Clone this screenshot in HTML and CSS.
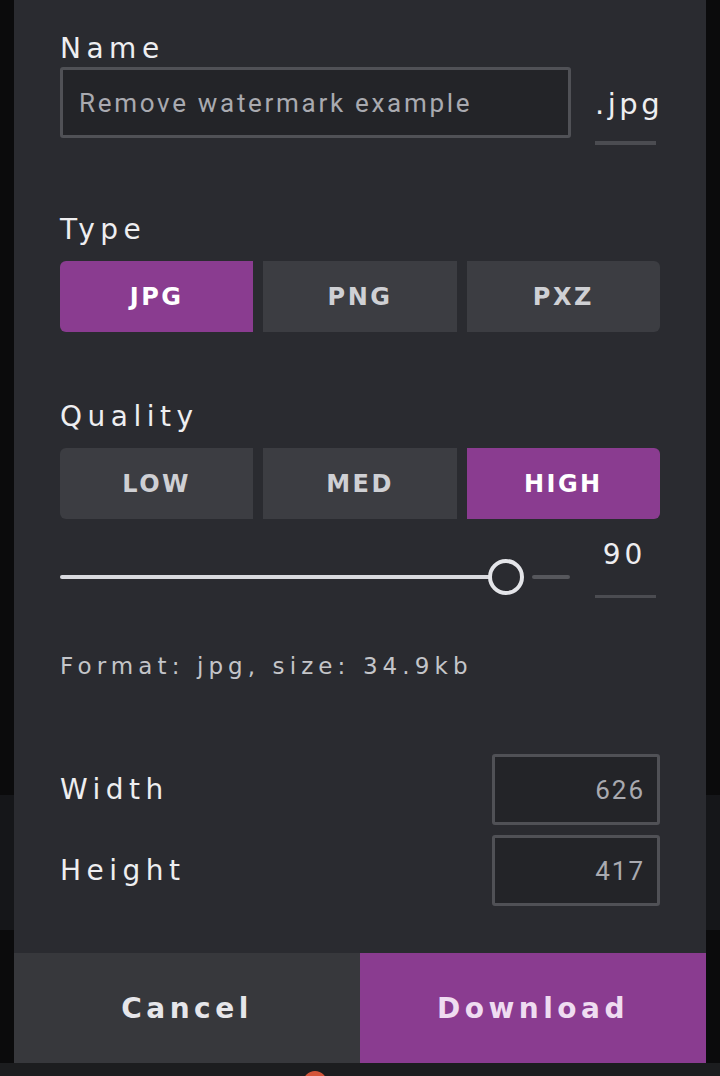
FILE: index.html
```html
<!DOCTYPE html>
<html>
<head>
<meta charset="utf-8">
<link rel="stylesheet" href="styles.css">
</head>
<body>
<div class="screen">
  <div class="dialog">
    <div class="body">
      <div class="label">Name</div>
      <div class="name-row">
        <div class="input name-input">Remove watermark example</div>
        <div class="ext">.jpg</div>
      </div>

      <div class="label section">Type</div>
      <div class="seg">
        <div class="seg-btn active">JPG</div>
        <div class="seg-btn">PNG</div>
        <div class="seg-btn">PXZ</div>
      </div>

      <div class="label section">Quality</div>
      <div class="seg">
        <div class="seg-btn">LOW</div>
        <div class="seg-btn">MED</div>
        <div class="seg-btn active">HIGH</div>
      </div>

      <div class="slider-row">
        <div class="slider">
          <div class="track-fill"></div>
          <div class="thumb"></div>
          <div class="track-rest"></div>
        </div>
        <div class="value">90</div>
      </div>

      <div class="format">Format: jpg, size: 34.9kb</div>

      <div class="dims">
        <div class="dim-row">
          <div class="label">Width</div>
          <div class="input dim-input">626</div>
        </div>
        <div class="dim-row">
          <div class="label">Height</div>
          <div class="input dim-input">417</div>
        </div>
      </div>
    </div>
    <div class="footer">
      <div class="foot-btn cancel">Cancel</div>
      <div class="foot-btn download">Download</div>
    </div>
  </div>
  <div class="under">
    <div class="dot"></div>
  </div>
</div>
</body>
</html>
```

FILE: styles.css
```css
* { box-sizing: border-box; }
html, body { margin: 0; padding: 0; }
body {
  width: 720px;
  height: 1076px;
  overflow: hidden;
  background: linear-gradient(#0b0b0c 0, #0b0b0c 795px, #151619 795px, #151619 930px, #0b0b0c 930px);
  font-family: "DejaVu Sans", sans-serif;
}
.screen { display: flex; flex-direction: column; height: 1076px; }
.dialog {
  width: 692px;
  height: 1063px;
  margin-left: 14px;
  background: #2a2b30;
  display: flex;
  flex-direction: column;
}
.body { flex: 1; padding: 34px 46px 0 46px; }
.label {
  font-size: 28px;
  line-height: 30px;
  letter-spacing: 5.5px;
  color: #eeeef0;
}
.section { margin-top: 70px; }
.name-row { display: flex; margin-top: 3px; }
.input {
  background: #232428;
  border: 3px solid #505156;
  border-radius: 3px;
  font-family: Roboto, sans-serif;
  color: #a9aab0;
  font-size: 26px;
}
.name-input {
  width: 511px;
  height: 71px;
  padding-left: 16px;
  display: flex;
  align-items: center;
  letter-spacing: 2.7px;
}
.ext {
  width: 61px;
  height: 78px;
  margin-left: 24px;
  border-bottom: 4px solid #4b4c51;
  display: flex;
  align-items: center;
  justify-content: flex-start;
  color: #eeeef0;
  font-size: 29px;
  letter-spacing: 3.5px;
  white-space: nowrap;
}
.seg {
  display: flex;
  gap: 10px;
  margin-top: 16px;
  height: 71px;
  border-radius: 6px;
  overflow: hidden;
}
.seg-btn {
  flex: 1;
  background: #3c3d42;
  color: #cfd0d4;
  display: flex;
  align-items: center;
  justify-content: center;
  font-weight: bold;
  font-size: 24px;
  letter-spacing: 2.5px;
}
.seg-btn.active { background: #8a3c90; color: #ffffff; }
.slider-row {
  display: flex;
  margin-top: 16px;
  height: 63px;
}
.slider {
  width: 511px;
  height: 42px;
  align-self: flex-end;
  display: flex;
  align-items: center;
}
.track-fill { width: 431px; height: 4px; background: #d9dadf; border-radius: 2px; }
.thumb {
  width: 36px;
  height: 36px;
  margin-left: -3px;
  border: 4px solid #e4e5e9;
  border-radius: 50%;
  background: #2a2b30;
}
.track-rest { width: 38px; height: 4px; margin-left: 8px; background: #56575c; border-radius: 2px; }
.value {
  width: 61px;
  margin-left: 24px;
  border-bottom: 3px solid #4b4c51;
  display: flex;
  justify-content: center;
  padding-top: 5px;
  padding-right: 2px;
  color: #eeeef0;
  font-size: 28px;
  line-height: 30px;
  letter-spacing: 4px;
}
.format {
  margin-top: 56px;
  font-size: 23px;
  line-height: 24px;
  letter-spacing: 5.1px;
  color: #c4c5c9;
}
.dims { margin-top: 76px; display: flex; flex-direction: column; gap: 10px; }
.dim-row { display: flex; align-items: center; justify-content: space-between; }
.dim-input {
  width: 168px;
  height: 71px;
  display: flex;
  align-items: center;
  justify-content: flex-end;
  padding-right: 12px;
  letter-spacing: 2px;
}
.footer { height: 110px; display: flex; }
.foot-btn {
  flex: 1;
  display: flex;
  align-items: center;
  justify-content: center;
  font-weight: bold;
  font-size: 28px;
  letter-spacing: 4.5px;
}
.cancel { background: #37383c; color: #e6e6ea; }
.download { background: #8a3c90; color: #efdcf1; }
.under { flex: 1; background: #1c1d1f; position: relative; overflow: hidden; }
.dot {
  position: absolute;
  left: 303px;
  top: 8px;
  width: 24px;
  height: 24px;
  border-radius: 50%;
  background: #d4553a;
}
```
